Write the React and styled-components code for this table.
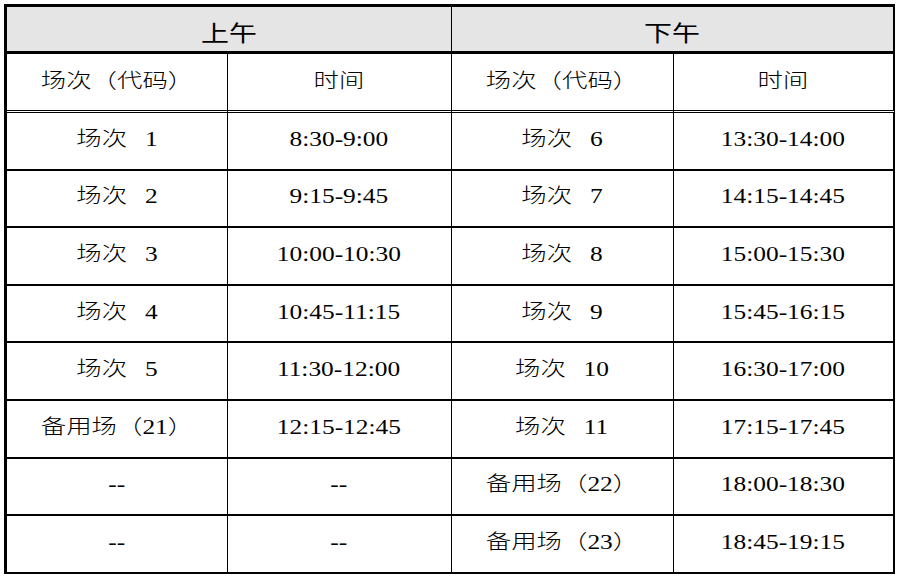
import React from "react";
import styled, { createGlobalStyle } from "styled-components";

const Global = createGlobalStyle`
  html, body { margin: 0; padding: 0; background: #ffffff; }
  body { font-family: "Liberation Serif", "Noto Sans CJK SC", serif; }
`;

const Page = styled.div`
  padding: 4px 0 0 4px;
`;

const Grid = styled.div`
  display: grid;
  width: 891px;
  box-sizing: border-box;
  grid-template-columns: 220.5px 224px 222px 221.5px;
  grid-template-rows: 47px 59px repeat(8, 57.6px);
  border-top: 3px solid #000;
  border-left: 3px solid #000;
`;

const Cell = styled.div`
  box-sizing: border-box;
  display: flex;
  align-items: center;
  justify-content: center;
  overflow: hidden;
  grid-column: ${(p) => (p.$span ? `span ${p.$span}` : "auto")};
  border-right: ${(p) => (p.$last ? "2px solid #000" : "1.5px solid #000")};
  border-bottom: ${(p) => p.$bottom || "2px solid #000"};
  background: ${(p) => (p.$shade ? "#e5e5e5" : "#ffffff")};
  color: #000;
`;

const Text = styled.span`
  display: inline-block;
  white-space: pre;
  transform: scaleX(1.27);
  transform-origin: center;
  font-family: ${(p) =>
    p.$head
      ? `"Noto Sans CJK SC", "Liberation Sans", sans-serif`
      : `"Liberation Serif", "Noto Sans CJK SC", serif`};
  font-size: ${(p) => (p.$head ? "22px" : "20px")};
  font-weight: ${(p) => (p.$head ? 400 : 200)};
  word-spacing: 9px;
  line-height: 1;
  margin-top: ${(p) => p.$shift || "0px"};
`;

const rows = [
  ["场次 1", "8:30-9:00", "场次 6", "13:30-14:00"],
  ["场次 2", "9:15-9:45", "场次 7", "14:15-14:45"],
  ["场次 3", "10:00-10:30", "场次 8", "15:00-15:30"],
  ["场次 4", "10:45-11:15", "场次 9", "15:45-16:15"],
  ["场次 5", "11:30-12:00", "场次 10", "16:30-17:00"],
  ["备用场（21）", "12:15-12:45", "场次 11", "17:15-17:45"],
  ["--", "--", "备用场（22）", "18:00-18:30"],
  ["--", "--", "备用场（23）", "18:45-19:15"],
];

const sub = ["场次（代码）", "时间", "场次（代码）", "时间"];

export default function App() {
  return (
    <Page>
      <Global />
      <Grid>
        <Cell $span={2} $shade $bottom="3px solid #000">
          <Text $head $shift="4px">上午</Text>
        </Cell>
        <Cell $span={2} $shade $last $bottom="3px solid #000">
          <Text $head $shift="4px">下午</Text>
        </Cell>
        {sub.map((t, i) => (
          <Cell key={"s" + i} $last={i === 3} $bottom="3px double #000">
            <Text $shift="-2px">{t}</Text>
          </Cell>
        ))}
        {rows.map((r, ri) =>
          r.map((t, ci) => (
            <Cell key={ri + "-" + ci} $last={ci === 3}>
              <Text $shift="-4px">{t}</Text>
            </Cell>
          ))
        )}
      </Grid>
    </Page>
  );
}
